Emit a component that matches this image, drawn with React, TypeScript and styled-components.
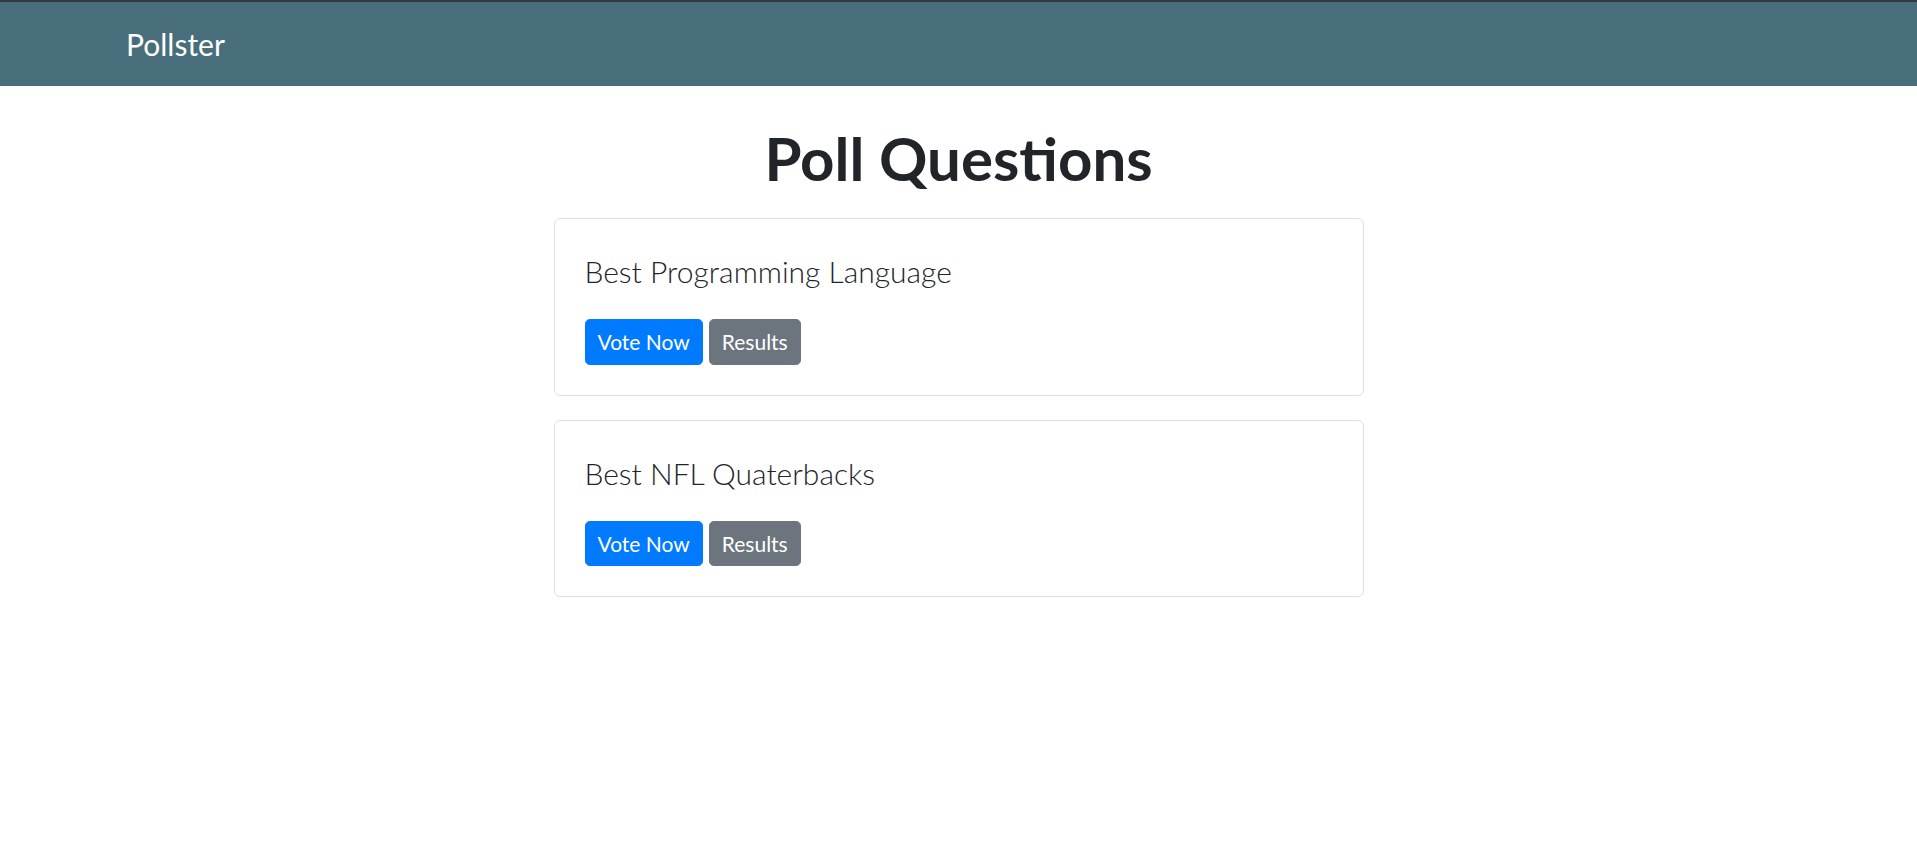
import React from "react";
import styled, { createGlobalStyle } from "styled-components";

interface Poll {
  id: number;
  question: string;
}

const polls: Poll[] = [
  { id: 1, question: "Best Programming Language" },
  { id: 2, question: "Best NFL Quaterbacks" },
];

const GlobalStyle = createGlobalStyle`
  * {
    box-sizing: border-box;
  }
  body {
    margin: 0;
    background: #fff;
    color: #212529;
    font-family: "Segoe UI", Lato, "Noto Sans", sans-serif;
    font-size: 24px;
    line-height: 1.5;
  }
`;

const NavBar = styled.nav`
  border-top: 2px solid #343a40;
  background: #486e7b;
  padding: 12px 0;
`;

const Container = styled.div`
  max-width: 1710px;
  margin: 0 auto;
  padding: 0 22.5px;
`;

const Brand = styled.a`
  display: inline-block;
  padding: 7.5px 0;
  color: #fff;
  font-size: 30px;
  line-height: 45px;
  text-decoration: none;
`;

const Main = styled.main`
  display: flex;
  flex-direction: column;
  align-items: center;
`;

const Heading = styled.h1`
  margin: 36px 0 24px;
  font-size: 60px;
  font-weight: 700;
  line-height: 72px;
  text-align: center;
`;

const CardList = styled.div`
  width: 810px;
  display: flex;
  flex-direction: column;
  gap: 24px;
`;

const Card = styled.div`
  border: 1px solid rgba(0, 0, 0, 0.125);
  border-radius: 6px;
  padding: 30px;
`;

const Question = styled.p`
  margin: 0 0 25px;
  font-size: 30px;
  font-weight: 300;
  line-height: 45px;
`;

const ButtonRow = styled.div`
  display: flex;
  gap: 6px;
`;

const Button = styled.button<{ $variant: "primary" | "secondary" }>`
  border: 1px solid ${(p) => (p.$variant === "primary" ? "#007bff" : "#6c757d")};
  background: ${(p) => (p.$variant === "primary" ? "#007bff" : "#6c757d")};
  color: #fff;
  font-family: inherit;
  font-size: 21px;
  line-height: 31.5px;
  padding: 6px 12px;
  border-radius: 4.8px;
  cursor: pointer;
`;

const App: React.FC = (): JSX.Element => {
  return (
    <>
      <GlobalStyle />
      <NavBar>
        <Container>
          <Brand href="#">Pollster</Brand>
        </Container>
      </NavBar>
      <Main>
        <Heading>Poll Questions</Heading>
        <CardList>
          {polls.map((poll) => (
            <Card key={poll.id}>
              <Question>{poll.question}</Question>
              <ButtonRow>
                <Button $variant="primary">Vote Now</Button>
                <Button $variant="secondary">Results</Button>
              </ButtonRow>
            </Card>
          ))}
        </CardList>
      </Main>
    </>
  );
};

export default App;
